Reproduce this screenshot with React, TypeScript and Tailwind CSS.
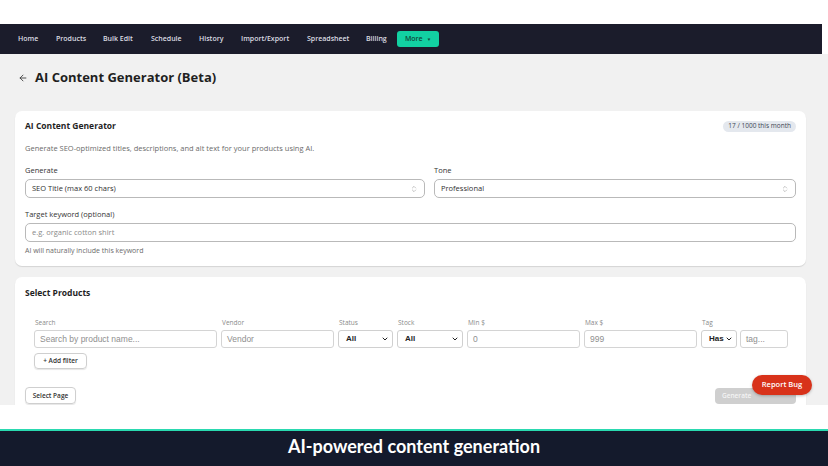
import { ArrowLeft, ChevronDown, ChevronsUpDown } from 'lucide-react'

const NAV: [string, string][] = [
  ['Home', 'w-[38px]'],
  ['Products', 'w-[47px]'],
  ['Bulk Edit', 'w-[48px]'],
  ['Schedule', 'w-[48px]'],
  ['History', 'w-[42px]'],
  ['Import/Export', 'w-[66px]'],
  ['Spreadsheet', 'w-[59px]'],
  ['Billing', 'w-[31px]'],
]

const UI_FONT = { fontFamily: '"Open Sans", "Noto Sans", Arial, sans-serif' }

function Select({ value }: { value: string }) {
  return (
    <div className="h-[19px] flex items-center justify-between rounded-[5px] border border-[#b9b9b9] bg-white pl-[6px] pr-[6px]">
      <span className="text-[7.5px] text-[#303030]">{value}</span>
      <ChevronsUpDown size={8} strokeWidth={1.5} className="text-[#8a8a8a]" />
    </div>
  )
}

function FilterField({ label, width, children }: { label: string; width: string; children: React.ReactNode }) {
  return (
    <div className={`flex flex-col ${width}`}>
      <span className="text-[6.5px] leading-[8px] text-[#8a8a8a] mb-[3px] pl-[1px]">{label}</span>
      {children}
    </div>
  )
}

function TextBox({ text }: { text: string }) {
  return (
    <div className="h-[18px] flex items-center rounded-[3px] border border-[#d4d4d4] bg-white px-[5px]">
      <span className="text-[8.5px] text-[#8f8f8f]" style={{ fontFamily: '"Liberation Sans", Arial, sans-serif' }}>
        {text}
      </span>
    </div>
  )
}

function SmallSelect({ text }: { text: string }) {
  return (
    <div className="h-[18px] flex items-center justify-between rounded-[3px] border border-[#d0d0d0] bg-white pl-[7px] pr-[3px]">
      <span className="text-[8px] font-bold text-[#222]" style={{ fontFamily: '"Liberation Sans", Arial, sans-serif' }}>{text}</span>
      <ChevronDown size={8} strokeWidth={3} className="text-[#222]" />
    </div>
  )
}

export default function App() {
  return (
    <div className="w-[828px] h-[466px] overflow-hidden bg-white flex flex-col" style={UI_FONT}>
      {/* top gap */}
      <div className="h-[24px] shrink-0" />

      {/* nav */}
      <div className="h-[30px] shrink-0 flex">
        <div className="w-[822px] bg-[#1b1c2b] flex items-center pl-[18px]">
          {NAV.map(([n, w]) => (
            <span key={n} className={`${w} shrink-0 whitespace-nowrap text-[7px] font-semibold text-[#dcdde3]`}>
              {n}
            </span>
          ))}
          <div className="h-[16px] w-[42px] rounded-[3px] bg-[#12d1a2] flex items-center justify-center gap-[4px]">
            <span className="text-[7px] font-semibold text-[#104a3a]">More</span>
            <span className="text-[4.5px] text-[#104a3a]">▼</span>
          </div>
        </div>
        <div className="flex-1 bg-white" />
      </div>

      {/* page */}
      <div className="h-[351px] shrink-0 bg-[#f1f1f1] px-[15px] relative overflow-hidden">
        <div className="flex items-center h-[18px] mt-[15px] pl-[3px] gap-[7px]">
          <ArrowLeft size={10} strokeWidth={2} className="text-[#333]" />
          <span className="text-[13px] font-bold text-[#1f1f1f]">AI Content Generator (Beta)</span>
        </div>

        {/* card 1 */}
        <div className="mt-[24px] w-[791px] bg-white rounded-[7px] shadow-[0_1px_1px_rgba(0,0,0,0.12)] px-[10px] pt-[9px] pb-[10px]">
          <div className="flex items-center justify-between h-[12px]">
            <span className="text-[8.5px] font-bold text-[#1f1f1f]">AI Content Generator</span>
            <span className="h-[11px] px-[5px] rounded-full bg-[#e4e8ee] text-[6.5px] text-[#3d4652] flex items-center">17 / 1000 this month</span>
          </div>
          <p className="mt-[11px] text-[7.5px] leading-[10px] text-[#6b6b6b]">
            Generate SEO-optimized titles, descriptions, and alt text for your products using AI.
          </p>
          <div className="mt-[12px] flex gap-[9px]">
            <div className="flex-1 flex flex-col">
              <span className="text-[7.5px] leading-[10px] text-[#333] mb-[4px]">Generate</span>
              <Select value="SEO Title (max 60 chars)" />
            </div>
            <div className="w-[362px] flex flex-col">
              <span className="text-[7.5px] leading-[10px] text-[#333] mb-[4px]">Tone</span>
              <Select value="Professional" />
            </div>
          </div>
          <span className="block mt-[11px] text-[7.5px] leading-[10px] text-[#333]">Target keyword (optional)</span>
          <div className="mt-[4px] h-[19px] rounded-[5px] border border-[#b9b9b9] flex items-center pl-[6px]">
            <span className="text-[7.5px] text-[#8a8a8a]">e.g. organic cotton shirt</span>
          </div>
          <span className="block mt-[4px] text-[7px] leading-[10px] text-[#6b6b6b]">AI will naturally include this keyword</span>
        </div>

        {/* card 2 */}
        <div className="mt-[11px] w-[791px] h-[140px] bg-white rounded-[7px] shadow-[0_1px_1px_rgba(0,0,0,0.12)] px-[10px] pt-[10px]">
          <span className="block text-[8.5px] leading-[12px] font-bold text-[#1f1f1f]">Select Products</span>
          <div className="mt-[20px] pl-[9px] flex gap-[4px]">
            <FilterField label="Search" width="w-[183px]"><TextBox text="Search by product name..." /></FilterField>
            <FilterField label="Vendor" width="w-[113px]"><TextBox text="Vendor" /></FilterField>
            <FilterField label="Status" width="w-[55px]"><SmallSelect text="All" /></FilterField>
            <FilterField label="Stock" width="w-[66px]"><SmallSelect text="All" /></FilterField>
            <FilterField label="Min $" width="w-[113px]"><TextBox text="0" /></FilterField>
            <FilterField label="Max $" width="w-[113px]"><TextBox text="999" /></FilterField>
            <div className="flex flex-col">
              <span className="text-[6.5px] leading-[8px] text-[#8a8a8a] mb-[3px] pl-[1px]">Tag</span>
              <div className="flex gap-[3px]">
                <div className="w-[36px]"><SmallSelect text="Has" /></div>
                <div className="w-[48px]"><TextBox text="tag..." /></div>
              </div>
            </div>
          </div>
          <div className="mt-[5px] ml-[9px] w-[53px] h-[16px] rounded-[4px] border border-[#cfcfcf] shadow-[0_1px_1px_rgba(0,0,0,0.1)] flex items-center justify-center">
            <span className="text-[6.5px] font-semibold text-[#333]">+ Add filter</span>
          </div>
          <div className="mt-[18px] flex items-center justify-between">
            <div className="w-[51px] h-[17px] rounded-[4px] border border-[#cfcfcf] shadow-[0_1px_1px_rgba(0,0,0,0.1)] flex items-center justify-center">
              <span className="text-[6.5px] font-semibold text-[#333]">Select Page</span>
            </div>
            <div className="w-[81px] h-[16px] rounded-[4px] bg-[#cfcfcf] flex items-center pl-[7px]">
              <span className="text-[6.5px] font-semibold text-[#f4f4f4]">Generate</span>
            </div>
          </div>
        </div>

        {/* floating report bug */}
        <div className="absolute left-[752px] top-[321px] w-[60px] h-[20px] rounded-full bg-[#d8321a] shadow-[0_1px_3px_rgba(0,0,0,0.25)] flex items-center justify-center">
          <span className="text-[7.5px] font-semibold text-white">Report Bug</span>
        </div>
      </div>

      {/* white gap */}
      <div className="h-[24px] shrink-0 bg-white" />

      {/* caption */}
      <div className="h-[2px] shrink-0 bg-[#2ad9b0]" />
      <div className="flex-1 bg-[#141a2c] flex items-center justify-center pb-[4px]">
        <span className="text-[18px] font-bold text-white" style={{ fontFamily: 'Lato, "Open Sans", sans-serif' }}>
          AI-powered content generation
        </span>
      </div>
    </div>
  )
}
